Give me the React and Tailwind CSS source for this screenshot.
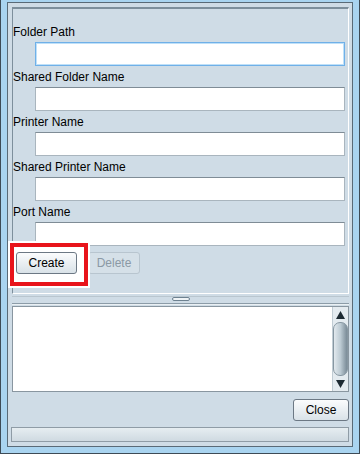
import React from 'react'

const fields = ['Folder Path', 'Shared Folder Name', 'Printer Name', 'Shared Printer Name', 'Port Name']

function Field({ label, focused, first }) {
  return (
    <div className={first ? '' : 'mt-[4px]'}>
      <div className="h-[15px] leading-[15px] text-[12px] text-black">{label}</div>
      <div
        className={`mt-[2px] ml-[22px] w-[310px] h-[24px] bg-white border ${
          focused
            ? 'border-[#6fb0e8] shadow-[inset_0_0_0_1px_#bfe0f8]'
            : 'border-[#a9b5be] border-t-[#7f8c96]'
        }`}
      />
    </div>
  )
}

function Arrow({ up }) {
  return (
    <svg width="9" height="8" viewBox="0 0 9 8">
      {up ? <polygon points="4.5,0 9,8 0,8" fill="#1d2a33" /> : <polygon points="0,0 9,0 4.5,8" fill="#1d2a33" />}
    </svg>
  )
}

export default function App() {
  return (
    <div className="relative w-[360px] h-[454px] bg-[#a9d4f0] border-x border-b border-[#3d4b56] pt-[2px] px-[6px] pb-[6px] font-['Liberation_Sans',Arial,sans-serif] text-[12px]">
      <div className="h-full border border-[#596a77] bg-[#cfdce6] flex flex-col">
        {/* top form panel */}
        <div className="mt-[4px] ml-[4px] mr-[3px] h-[287px] border-t-2 border-l border-t-[#7d8f9c] border-l-[#7d8f9c] border-r border-b border-r-white border-b-white pt-[16px]">
          {fields.map((f, i) => (
            <Field key={f} label={f} focused={i === 0} first={i === 0} />
          ))}
          <div className="flex mt-[6px] ml-[3px]">
            <button className="relative z-10 w-[61px] h-[22px] rounded-[3px] border border-[#6c7884] bg-gradient-to-b from-[#fbfcfd] to-[#d9e2e8] text-[12px] text-black leading-none">
              Create
            </button>
            <button className="ml-[11px] w-[52px] h-[22px] rounded-[3px] border border-[#b8c5cf] bg-[#d5e0e8] text-[12px] text-[#8b99a5] leading-none">
              Delete
            </button>
          </div>
        </div>

        {/* split divider */}
        <div className="h-[12px] ml-[4px] mr-[3px] flex flex-col">
          <div className="h-[2px]" />
          <div className="h-px bg-[#b9c6cf]" />
          <div className="flex justify-center">
            <div className="w-[18px] h-[4px] rounded-full border border-[#6e8291] bg-[#eef3f6]" />
          </div>
          <div className="h-[2px]" />
          <div className="h-px bg-[#8c9ca8]" />
          <div className="h-px bg-[#eaf0f3]" />
        </div>

        {/* log text area */}
        <div className="ml-[4px] mr-[3px] h-[86px] bg-white border border-[#8996a0] flex justify-end">
          <div className="w-[16px] h-full bg-[#e4ebf0] border-l border-[#c1ccd4] flex flex-col items-center">
            <div className="h-[15px] flex items-center justify-center">
              <Arrow up />
            </div>
            <div className="w-[15px] flex-1 rounded-[7px] border border-[#8797a2] bg-gradient-to-r from-[#e2e9ee] via-[#bccad3] to-[#7b8c98]" />
            <div className="h-[15px] flex items-center justify-center">
              <Arrow />
            </div>
          </div>
        </div>

        <div className="flex justify-end mr-[3px] mt-[7px]">
          <button className="w-[56px] h-[22px] rounded-[3px] border border-[#6c7884] bg-gradient-to-b from-[#fbfcfd] to-[#d9e2e8] text-[12px] text-black leading-none">
            Close
          </button>
        </div>

        <div className="mt-[6px] ml-[3px] mr-[3px] h-[15px] border border-[#8f9ca6] bg-gradient-to-b from-[#e6edf1] to-[#cfdae1]" />
      </div>

      {/* red highlight annotation around Create */}
      <div className="absolute left-[7px] top-[241px] w-[82px] h-[47px] border-2 border-white">
        <div className="w-full h-full border-4 border-[#e8141b] bg-white" />
      </div>
    </div>
  )
}
